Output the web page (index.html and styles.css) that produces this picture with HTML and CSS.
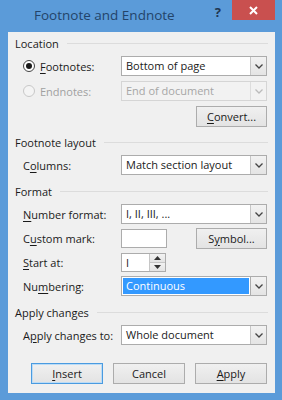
FILE: index.html
```html
<!DOCTYPE html>
<html>

<head>
    <title>Footnote and Endnote</title>
    <meta charset="UTF-8">
    <link rel="stylesheet" href="styles.css">
</head>

<body>
    <div class="window">
        <div class="titlebar">
            <span class="title">Footnote and Endnote</span>
            <span class="help">?</span>
            <span class="close">
                <svg width="9" height="9" viewBox="0 0 9 9"><path d="M1 1L8 8M8 1L1 8" stroke="#fff" stroke-width="2"/></svg>
            </span>
        </div>
        <div class="panel">
            <div class="group-title">Location</div>
            <div class="rows loose">
                <div class="row">
                    <label class="label radio-label"><span class="radio checked"></span><u>F</u>ootnotes:</label>
                    <div class="select">
                        <span class="value">Bottom of page</span>
                        <span class="arrow"><svg width="8" height="5" viewBox="0 0 8 5"><path d="M0.5 0.5L4 4L7.5 0.5" fill="none" stroke="#444" stroke-width="1.3"/></svg></span>
                    </div>
                </div>
                <div class="row">
                    <label class="label radio-label disabled"><span class="radio"></span>Endnotes:</label>
                    <div class="select disabled">
                        <span class="value">End of document</span>
                        <span class="arrow"><svg width="8" height="5" viewBox="0 0 8 5"><path d="M0.5 0.5L4 4L7.5 0.5" fill="none" stroke="#bbb" stroke-width="1.3"/></svg></span>
                    </div>
                </div>
                <div class="row end">
                    <button class="btn"><u>C</u>onvert...</button>
                </div>
            </div>

            <div class="group-title">Footnote layout</div>
            <div class="rows loose">
                <div class="row">
                    <label class="label">C<u>o</u>lumns:</label>
                    <div class="select">
                        <span class="value">Match section layout</span>
                        <span class="arrow"><svg width="8" height="5" viewBox="0 0 8 5"><path d="M0.5 0.5L4 4L7.5 0.5" fill="none" stroke="#444" stroke-width="1.3"/></svg></span>
                    </div>
                </div>
            </div>

            <div class="group-title">Format</div>
            <div class="rows">
                <div class="row">
                    <label class="label"><u>N</u>umber format:</label>
                    <div class="select">
                        <span class="value">I, II, III, ...</span>
                        <span class="arrow"><svg width="8" height="5" viewBox="0 0 8 5"><path d="M0.5 0.5L4 4L7.5 0.5" fill="none" stroke="#444" stroke-width="1.3"/></svg></span>
                    </div>
                </div>
                <div class="row">
                    <label class="label">C<u>u</u>stom mark:</label>
                    <div class="textbox mark"></div>
                    <button class="btn push">S<u>y</u>mbol...</button>
                </div>
                <div class="row">
                    <label class="label"><u>S</u>tart at:</label>
                    <div class="textbox spinner">
                        <span class="spin-value">I</span>
                        <span class="spin-buttons">
                            <span class="spin"><svg width="7" height="4" viewBox="0 0 7 4"><path d="M0 4L3.5 0L7 4Z" fill="#333"/></svg></span>
                            <span class="spin"><svg width="7" height="4" viewBox="0 0 7 4"><path d="M0 0L3.5 4L7 0Z" fill="#333"/></svg></span>
                        </span>
                    </div>
                </div>
                <div class="row">
                    <label class="label">Nu<u>m</u>bering:</label>
                    <div class="select focused">
                        <span class="value">Continuous</span>
                        <span class="arrow"><svg width="8" height="5" viewBox="0 0 8 5"><path d="M0.5 0.5L4 4L7.5 0.5" fill="none" stroke="#444" stroke-width="1.3"/></svg></span>
                    </div>
                </div>
            </div>

            <div class="group-title">Apply changes</div>
            <div class="rows loose">
                <div class="row">
                    <label class="label">A<u>p</u>ply changes to:</label>
                    <div class="select">
                        <span class="value">Whole document</span>
                        <span class="arrow"><svg width="8" height="5" viewBox="0 0 8 5"><path d="M0.5 0.5L4 4L7.5 0.5" fill="none" stroke="#444" stroke-width="1.3"/></svg></span>
                    </div>
                </div>
            </div>

            <div class="actions">
                <button class="btn wide default"><u>I</u>nsert</button>
                <button class="btn wide">Cancel</button>
                <button class="btn wide"><u>A</u>pply</button>
            </div>
        </div>
    </div>
</body>

</html>
```

FILE: styles.css
```css
* {
    margin: 0;
    padding: 0;
    box-sizing: border-box;
}

body {
    font-family: "Open Sans", sans-serif;
    font-size: 11px;
    color: #1a1a1a;
    background-color: #5b9bd9;
}

u {
    text-decoration-thickness: 1px;
    text-underline-offset: 2px;
}

.window {
    width: 282px;
    height: 400px;
    background-color: #5b9bd9;
    padding: 0 7px 7px 8px;
    display: flex;
    flex-direction: column;
}

.titlebar {
    height: 32px;
    display: flex;
    align-items: flex-start;
}

.title {
    font-size: 13.5px;
    line-height: 20px;
    color: #23446a;
    padding: 5px 0 0 26px;
    white-space: nowrap;
}

.help {
    margin-left: auto;
    margin-right: 11px;
    font-weight: bold;
    font-size: 13px;
    line-height: 20px;
    padding-top: 2px;
    color: #1f3550;
}

.close {
    width: 43px;
    height: 20px;
    background-color: #c9504f;
    display: flex;
    align-items: center;
    justify-content: center;
}

.panel {
    flex: 1;
    background-color: #f0f0f0;
    padding: 3px 8px 9px 0;
    display: flex;
    flex-direction: column;
}

.group-title {
    display: flex;
    align-items: center;
    height: 16px;
    padding-left: 7px;
    margin-bottom: 5px;
    white-space: nowrap;
}

.group-title::after {
    content: "";
    flex: 1;
    height: 1px;
    margin-left: 8px;
    margin-right: -1px;
    background-color: #dcdcdc;
}

.rows {
    display: flex;
    flex-direction: column;
    gap: 4px;
    padding-left: 15px;
    margin-bottom: 8px;
}

.rows.loose {
    gap: 5px;
}

.row {
    display: flex;
    align-items: center;
    height: 20px;
}

.row.end {
    justify-content: flex-end;
}

.label {
    width: 98px;
    flex-shrink: 0;
    white-space: nowrap;
}

.radio-label {
    display: flex;
    align-items: center;
}

.radio-label.disabled {
    color: #a0a0a0;
}

.radio {
    width: 12px;
    height: 12px;
    border: 1px solid #444;
    border-radius: 50%;
    background-color: #fff;
    margin-right: 5px;
    display: flex;
    align-items: center;
    justify-content: center;
}

.radio.checked::after {
    content: "";
    width: 6px;
    height: 6px;
    border-radius: 50%;
    background-color: #1a1a1a;
}

.radio-label.disabled .radio {
    border-color: #c8c8c8;
    background-color: #f4f4f4;
}

.select {
    width: 146px;
    height: 20px;
    border: 1px solid #acacac;
    background-color: #fff;
    display: flex;
}

.select .value {
    flex: 1;
    padding-left: 4px;
    line-height: 18px;
    white-space: nowrap;
}

.select .arrow {
    width: 16px;
    border-left: 1px solid #c6c6c6;
    background: linear-gradient(#f2f2f2, #e4e4e4);
    display: flex;
    align-items: center;
    justify-content: center;
}

.select.disabled {
    border-color: #d5d5d5;
    background-color: #f2f2f2;
}

.select.disabled .value {
    color: #a6a6a6;
}

.select.disabled .arrow {
    border-left-color: #dddddd;
    background: #f2f2f2;
}

.select.focused .value {
    margin: 1px;
    padding-left: 3px;
    line-height: 16px;
    background-color: #3399ff;
    color: #fff;
}

.select.focused .arrow {
    border-left-color: #acacac;
}

.textbox {
    height: 19px;
    border: 1px solid #acacac;
    background-color: #fff;
}

.mark {
    width: 46px;
}

.spinner {
    width: 45px;
    display: flex;
}

.spin-value {
    flex: 1;
    padding-left: 4px;
    line-height: 17px;
}

.spin-buttons {
    width: 16px;
    display: flex;
    flex-direction: column;
    border-left: 1px solid #c6c6c6;
}

.spin {
    flex: 1;
    display: flex;
    align-items: center;
    justify-content: center;
    background: linear-gradient(#f2f2f2, #e4e4e4);
}

.spin + .spin {
    border-top: 1px solid #c6c6c6;
}

.btn {
    width: 71px;
    height: 21px;
    border: 1px solid #acacac;
    background: linear-gradient(#f0f0f0, #e3e3e3);
    font-family: "Open Sans", sans-serif;
    font-size: 11px;
    color: #1a1a1a;
}

.push {
    margin-left: auto;
}

.actions {
    margin-top: auto;
    display: flex;
    justify-content: flex-end;
    gap: 10px;
}

.btn.wide {
    width: 72px;
}

.btn.default {
    border-color: #4a9be0;
    box-shadow: inset 0 0 0 1px #bcdcf6;
}
```
